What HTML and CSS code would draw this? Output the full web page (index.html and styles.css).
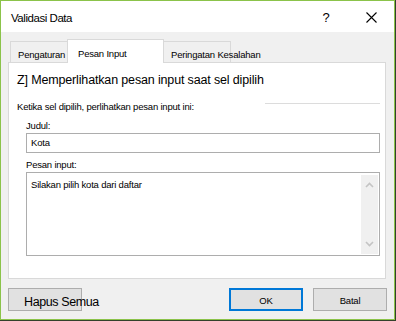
FILE: index.html
```html
<!DOCTYPE html>
<html>
<head>
<meta charset="utf-8">
<link rel="stylesheet" href="styles.css">
</head>
<body>
<div class="win">
  <div class="titlebar">
    <span class="title">Validasi Data</span>
    <span class="help">?</span>
    <span class="close"><svg width="11" height="11" viewBox="0 0 11 11"><path d="M0.5 0.5 L10.5 10.5 M10.5 0.5 L0.5 10.5" stroke="#000" stroke-width="1.1" fill="none"/></svg></span>
  </div>
  <div class="body">
    <div class="tabs">
      <div class="tab tab-first">Pengaturan</div>
      <div class="tab tab-active">Pesan Input</div>
      <div class="tab tab-last"><span class="overflow">Peringatan Kesalahan</span></div>
    </div>
    <div class="panel">
      <div class="check">Z] Memperlihatkan pesan input saat sel dipilih</div>
      <div class="group">
        <span class="group-label">Ketika sel dipilih, perlihatkan pesan input ini:</span>
        <span class="group-line"></span>
      </div>
      <div class="field-label">Judul:</div>
      <div class="textbox">Kota</div>
      <div class="field-label">Pesan input:</div>
      <div class="textarea">
        <div class="ta-text">Silakan pilih kota dari daftar</div>
        <div class="scrollbar">
          <svg width="9" height="6" viewBox="0 0 9 6"><path d="M1 5 L4.5 1.5 L8 5" stroke="#c4c4c4" stroke-width="1.6" fill="none"/></svg>
          <svg width="9" height="6" viewBox="0 0 9 6"><path d="M1 1 L4.5 4.5 L8 1" stroke="#c4c4c4" stroke-width="1.6" fill="none"/></svg>
        </div>
      </div>
    </div>
    <div class="buttons">
      <div class="btn btn-clear"><span class="overflow">Hapus Semua</span></div>
      <div class="spacer"></div>
      <div class="btn btn-ok">OK</div>
      <div class="btn btn-cancel">Batal</div>
    </div>
  </div>
</div>
</body>
</html>
```
FILE: styles.css
```css
html, body {
  margin: 0;
  padding: 0;
  background: #33412a;
}
body {
  width: 396px;
  height: 321px;
  overflow: hidden;
  font-family: "Liberation Sans", Arial, sans-serif;
  color: #000;
}
.win {
  width: 393px;
  height: 318px;
  border: 1px solid #8bc34a;
  background: #f0f0f0;
  display: flex;
  flex-direction: column;
}
.titlebar {
  height: 31px;
  background: #fff;
  display: flex;
  align-items: center;
  flex-shrink: 0;
}
.title {
  font-size: 11.5px;
  letter-spacing: -0.45px;
  margin-left: 10px;
  margin-top: 3px;
  flex: 1;
}
.help {
  font-size: 13px;
  width: 10px;
  margin-right: 35px;
  text-align: center;
  margin-top: 2px;
}
.close {
  width: 11px;
  height: 11px;
  margin-right: 17px;
  margin-top: 2px;
  display: flex;
}
.body {
  flex: 1;
  display: flex;
  flex-direction: column;
  padding: 0 8px 0 7px;
}
.tabs {
  display: flex;
  height: 30px;
  align-items: flex-end;
  padding-left: 2px;
  flex-shrink: 0;
}
.tab {
  font-size: 9.5px;
  letter-spacing: -0.2px;
  height: 21px;
  border: 1px solid #d9d9d9;
  border-bottom: none;
  box-sizing: border-box;
  background: #f0f0f0;
  padding-top: 7px;
  white-space: nowrap;
  position: relative;
}
.tab-first {
  width: 57px;
  padding-left: 7px;
  border-right: none;
}
.tab-active {
  width: 97px;
  height: 24px;
  background: #fff;
  padding-left: 10px;
  padding-top: 8px;
  margin-bottom: -1px;
  z-index: 1;
}
.tab-last {
  width: 67px;
  padding-left: 7px;
  border-left: none;
}
.overflow {
  white-space: nowrap;
}
.panel {
  height: 217px;
  border: 1px solid #d9d9d9;
  background: #fff;
  padding: 0 5px 0 8px;
  display: flex;
  flex-direction: column;
  box-sizing: border-box;
}
.check {
  font-size: 12.5px;
  letter-spacing: -0.15px;
  margin-top: 9px;
  height: 16px;
  line-height: 16px;
}
.group {
  display: flex;
  align-items: flex-start;
  margin-top: 12px;
  height: 14px;
}
.group-label {
  font-size: 9.5px;
  letter-spacing: -0.2px;
  white-space: nowrap;
  line-height: 14px;
}
.group-line {
  flex: 1;
  height: 1px;
  background: #dcdcdc;
  margin-left: 71px;
  margin-top: 3px;
}
.field-label {
  font-size: 9.5px;
  letter-spacing: -0.2px;
  margin-left: 9px;
  margin-top: 5px;
  height: 14px;
  line-height: 14px;
}
.textbox {
  margin-left: 9px;
  height: 20px;
  border: 1px solid #adadad;
  box-sizing: border-box;
  font-size: 9.5px;
  letter-spacing: -0.2px;
  line-height: 18px;
  padding-left: 4px;
}
.textarea {
  margin-left: 9px;
  height: 84px;
  border: 1px solid #adadad;
  box-sizing: border-box;
  display: flex;
  padding: 2px 1px 1px 4px;
}
.ta-text {
  flex: 1;
  font-size: 9.5px;
  letter-spacing: -0.2px;
  padding-top: 4px;
}
.scrollbar {
  width: 17px;
  height: 79px;
  background: #f0f0f0;
  display: flex;
  flex-direction: column;
  align-items: center;
  justify-content: space-between;
  padding: 7px 0 7px;
  box-sizing: border-box;
}
.buttons {
  display: flex;
  margin-top: 9px;
  height: 23px;
}
.btn {
  width: 74px;
  height: 23px;
  box-sizing: border-box;
  border: 1px solid #adadad;
  background: #e1e1e1;
  font-size: 9.5px;
  letter-spacing: -0.2px;
  display: flex;
  align-items: center;
  justify-content: center;
  white-space: nowrap;
  padding-top: 2px;
}
.btn-clear {
  justify-content: flex-start;
  padding-left: 15px;
  font-size: 12.5px;
  letter-spacing: -0.4px;
  padding-top: 4px;
}
.spacer {
  flex: 1;
}
.btn-ok {
  border: 2px solid #0078d7;
  margin-right: 10px;
}
.btn-cancel {
  margin-right: -1px;
}
```
